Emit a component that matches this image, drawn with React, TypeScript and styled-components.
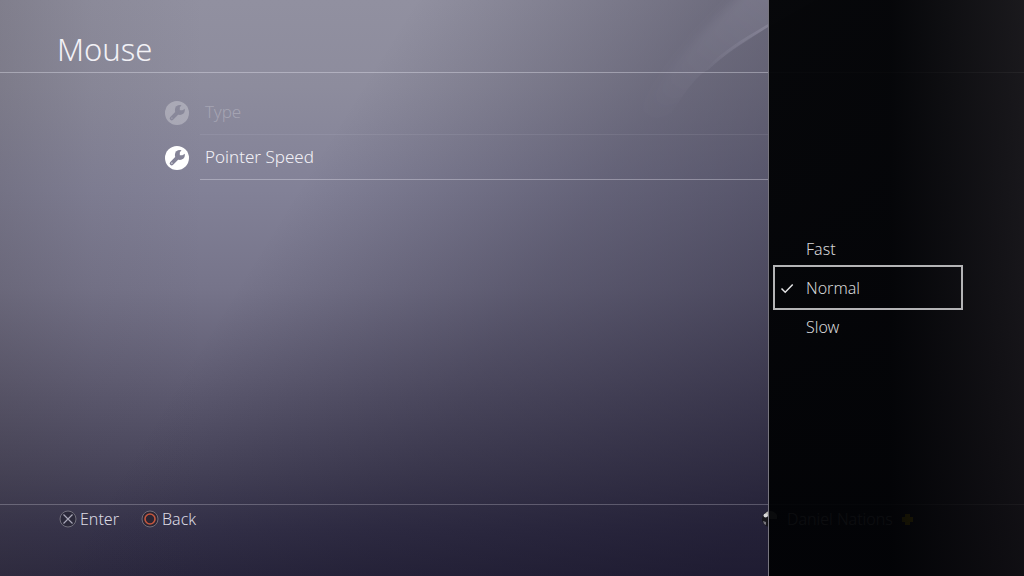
import React, { useState } from "react";
import styled, { createGlobalStyle } from "styled-components";

const GlobalStyle = createGlobalStyle`
  *, *::before, *::after { box-sizing: border-box; }
  body {
    margin: 0;
    background: #26233a;
    color: #f2f1f6;
    font-family: "Noto Sans", "Open Sans", sans-serif;
    font-size: 17px;
    font-weight: 300;
    line-height: 24px;
  }
  button { font: inherit; color: inherit; }
`;

const Shell = styled.div`
  display: grid;
  grid-template-columns: minmax(0, 3fr) minmax(0, 1fr);
  min-height: 100vh;
`;

const Screen = styled.div`
  grid-column: 1 / -1;
  grid-row: 1;
  position: relative;
  display: flex;
  flex-direction: column;
  background:
    linear-gradient(90deg, rgba(60, 55, 60, 0.2) 0%, rgba(60, 55, 60, 0.07) 9%, rgba(60, 55, 60, 0) 20%),
    linear-gradient(122deg, rgba(20, 17, 38, 0) 30%, rgba(20, 17, 38, 0.28) 52%, rgba(20, 17, 38, 0.52) 78%),
    linear-gradient(180deg, #9190a0 0%, #8d8c9d 15%, #828197 33%, #76748a 50%, #605d73 66%, #47445a 82%, #35324a 92%, #2b283f 100%);
`;

const Wave = styled.svg`
  position: absolute;
  top: 0;
  left: 58%;
  width: 22%;
  height: 36%;
`;

const Header = styled.header`
  padding: 28px 57px 0;
  height: 73px;
  border-bottom: 1px solid rgba(235, 233, 245, 0.38);
`;

const Title = styled.h1`
  margin: 0;
  font-size: 31px;
  font-weight: 300;
  line-height: 42px;
`;

const Settings = styled.ul`
  flex: 1;
  margin: 0;
  padding: 17px 25% 0 165px;
  list-style: none;
`;

const SettingButton = styled.button`
  display: flex;
  align-items: center;
  gap: 11px;
  width: 100%;
  height: 45px;
  padding: 0;
  border: 0;
  background: none;
  text-align: left;
`;

const SettingLabel = styled.span<{ $dim?: boolean }>`
  flex: 1;
  align-self: stretch;
  padding: 10px 5px 0;
  border-bottom: 1px solid rgba(235, 233, 245, ${(p) => (p.$dim ? 0.09 : 0.36)});
  color: ${(p) => (p.$dim ? "rgba(242, 241, 246, 0.27)" : "inherit")};
`;

const RoundIcon = styled.svg<{ $dim?: boolean }>`
  width: 24px;
  height: 24px;
  opacity: ${(p) => (p.$dim ? 0.28 : 1)};
`;

const Footer = styled.footer`
  display: grid;
  grid-template-columns: minmax(0, 3fr) minmax(0, 1fr);
  align-items: start;
  height: 72px;
  padding-top: 2px;
  border-top: 1px solid rgba(235, 233, 245, 0.26);
`;

const Hints = styled.div`
  display: flex;
  gap: 22px;
  padding-left: 59px;
`;

const HintButton = styled.button`
  display: flex;
  align-items: center;
  gap: 3px;
  padding: 0;
  border: 0;
  background: none;
  color: #dcdae3;
  font-size: 16px;
`;

const PadIcon = styled.svg`
  width: 18px;
  height: 18px;
`;

const Profile = styled.div`
  display: flex;
  align-items: center;
  gap: 8px;
  margin-left: -6px;
  color: #dcdae3;
  font-size: 16px;
`;

const ProfileIcon = styled.svg`
  width: 17px;
  height: 18px;
`;

const Plus = styled.svg`
  width: 13px;
  height: 13px;
`;

const Panel = styled.aside`
  grid-column: 2;
  grid-row: 1;
  z-index: 1;
  display: flex;
  align-items: center;
  border-left: 1px solid #77757e;
  background: linear-gradient(90deg, rgba(1, 2, 4, 0.95) 0%, rgba(1, 2, 4, 0.95) 48%, rgba(12, 11, 11, 0.8) 100%);
`;

const Options = styled.fieldset`
  display: flex;
  flex-direction: column;
  gap: 2px;
  width: 75%;
  min-width: 0;
  margin: 0;
  padding: 0 1px 1px 8px;
  border: 0;
`;

const Option = styled.label<{ $selected: boolean }>`
  display: flex;
  align-items: center;
  gap: 12px;
  height: 37px;
  padding-left: 3px;
  color: #d6d6d8;
  font-size: 16px;
  outline: ${(p) => (p.$selected ? "2px solid #b4b4b6" : "none")};
  outline-offset: 2px;
`;

const Radio = styled.input`
  position: absolute;
  margin: 0;
  opacity: 0;
`;

const Check = styled.svg<{ $shown: boolean }>`
  width: 14px;
  height: 14px;
  visibility: ${(p) => (p.$shown ? "visible" : "hidden")};
`;

function WrenchIcon({ id, dim }: { id: string; dim?: boolean }) {
  return (
    <RoundIcon viewBox="0 0 24 24" $dim={dim} aria-hidden="true">
      <mask id={id}>
        <circle cx="12" cy="12" r="12" fill="#fff" />
        <path d="M6.700 17.300 13.500 10.500" stroke="#000" strokeWidth="4" strokeLinecap="round" />
        <circle cx="14.900" cy="8.900" r="5" fill="#000" />
        <path d="M14.800 9.200V6.600L17.600 2.500 22 6.400 17.400 9.200Z" fill="#fff" />
        <circle cx="6.900" cy="17.100" r=".7" fill="#fff" />
      </mask>
      <rect width="24" height="24" fill="#fff" mask={`url(#${id})`} />
    </RoundIcon>
  );
}

const speeds = ["Fast", "Normal", "Slow"];

export default function App() {
  const [speed, setSpeed] = useState("Normal");
  return (
    <>
      <GlobalStyle />
      <Shell>
        <Screen>
          <Wave viewBox="0 0 225 207" preserveAspectRatio="none" aria-hidden="true">
            <defs>
              <linearGradient id="sheen" x1="1" y1="0" x2="0.15" y2="0.9">
                <stop offset="0" stopColor="#d8d6ea" stopOpacity=".15" />
                <stop offset=".5" stopColor="#d8d6ea" stopOpacity=".08" />
                <stop offset="1" stopColor="#d8d6ea" stopOpacity="0" />
              </linearGradient>
              <linearGradient id="rim" x1="1" y1="0" x2="0" y2="1">
                <stop offset="0" stopColor="#d8d6ea" stopOpacity=".16" />
                <stop offset="1" stopColor="#d8d6ea" stopOpacity="0" />
              </linearGradient>
              <filter id="soften" x="-20%" y="-20%" width="140%" height="140%">
                <feGaussianBlur stdDeviation="5" />
              </filter>
              <clipPath id="under">
                <path d="M0 -40V207H20C60 150 90 80 114 70C128 56 150 42 174 27L225 -2V-40Z" />
              </clipPath>
            </defs>
            <g clipPath="url(#under)">
              <path
                d="M240 -20H160C125 18 80 50 30 140C60 120 90 100 114 80C135 65 150 52 190 37L240 -2Z"
                fill="url(#sheen)"
                filter="url(#soften)"
              />
            </g>
            <path d="M174 27C150 41 130 54 114 70L110 70C128 51 150 38 174 24Z" fill="url(#rim)" />
          </Wave>
          <Header>
            <Title>Mouse</Title>
          </Header>
          <Settings>
            <li>
              <SettingButton type="button" disabled>
                <WrenchIcon id="wrench-type" dim />
                <SettingLabel $dim>Type</SettingLabel>
              </SettingButton>
            </li>
            <li>
              <SettingButton type="button">
                <WrenchIcon id="wrench-speed" />
                <SettingLabel>Pointer Speed</SettingLabel>
              </SettingButton>
            </li>
          </Settings>
          <Footer>
            <Hints>
              <HintButton type="button">
                <PadIcon viewBox="0 0 18 18" aria-hidden="true">
                  <circle cx="9" cy="9" r="8" fill="#2b293a" stroke="#716f7b" />
                  <path d="m4.500 4.500 9 9m0-9-9 9" stroke="#a9a8b8" strokeWidth="1.200" />
                </PadIcon>
                Enter
              </HintButton>
              <HintButton type="button">
                <PadIcon viewBox="0 0 18 18" aria-hidden="true">
                  <circle cx="9" cy="9" r="8" fill="#2b2533" stroke="#716c78" />
                  <circle cx="9" cy="9" r="5" fill="none" stroke="#c4573f" strokeWidth="1.600" />
                </PadIcon>
                Back
              </HintButton>
            </Hints>
            <Profile>
              <ProfileIcon viewBox="0 0 17 18" aria-hidden="true">
                <path d="M0 9C1 3 5 1 9 1s7 3 7 7v1H9l-2 8C3 16 0 13 0 9Z" fill="#17161c" />
                <path d="M3 4c2-4 9-4 12 1v4H8L5 6Z" fill="#b9b8b4" />
                <circle cx="3.500" cy="5.500" r="2" fill="#d8d8da" />
                <path d="m1 11 3 1v3l-2-1Z" fill="#77757c" />
              </ProfileIcon>
              <span>Daniel Nations</span>
              <Plus viewBox="0 0 13 13" aria-hidden="true">
                <path d="M4 1h5v3h3v5H9v3H4V9H1V4h3Z" fill="#ffd400" />
              </Plus>
            </Profile>
          </Footer>
        </Screen>
        <Panel>
          <Options aria-label="Pointer Speed">
            {speeds.map((name) => (
              <Option key={name} $selected={name === speed}>
                <Radio
                  type="radio"
                  name="pointer-speed"
                  checked={name === speed}
                  onChange={() => setSpeed(name)}
                />
                <Check viewBox="0 0 14 14" $shown={name === speed} aria-hidden="true">
                  <path d="m1.500 7.500 3.700 3.700L12.700 3.500" fill="none" stroke="#e4e4e6" strokeWidth="1.500" />
                </Check>
                {name}
              </Option>
            ))}
          </Options>
        </Panel>
      </Shell>
    </>
  );
}
